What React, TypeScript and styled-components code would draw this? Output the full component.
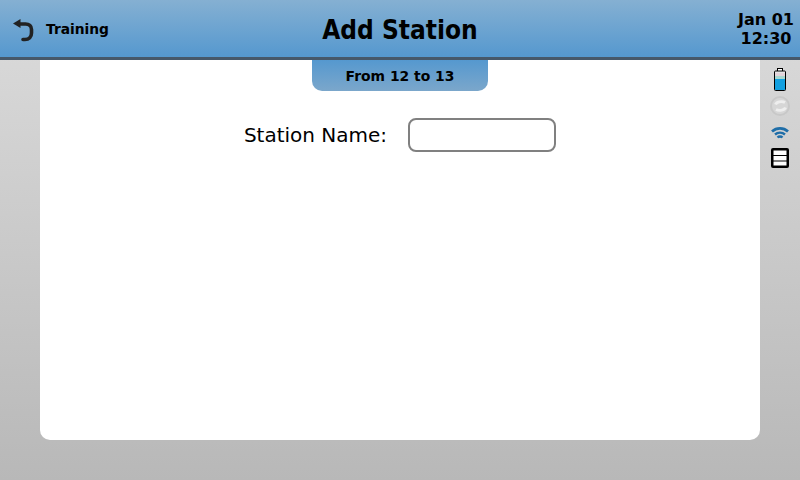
import styled, { createGlobalStyle } from 'styled-components'

const GlobalStyle = createGlobalStyle`
  html, body {
    margin: 0;
    padding: 0;
    overflow: hidden;
  }
  * {
    box-sizing: border-box;
  }
`

const Screen = styled.div`
  width: 800px;
  height: 480px;
  display: flex;
  flex-direction: column;
  background: linear-gradient(to bottom, #dcdcdc, #b8b8b8);
  font-family: 'DejaVu Sans', sans-serif;
  color: #000;
`

const Header = styled.header`
  height: 60px;
  flex: none;
  display: grid;
  grid-template-columns: 1fr auto 1fr;
  align-items: center;
  background: linear-gradient(to bottom, #85b0d2, #5598cf);
  border-bottom: 3px solid #46586a;
`

const BackArea = styled.div`
  display: flex;
  align-items: center;
  gap: 12px;
  padding-left: 12px;
`

const BackIconSlot = styled.div`
  display: flex;
  margin-top: 3px;
`

const BackLabel = styled.span`
  font-size: 13.8px;
  font-weight: bold;
`

const Title = styled.h1`
  margin: 2px 0 0;
  font-family: 'DejaVu Sans Condensed', 'DejaVu Sans', sans-serif;
  font-size: 26px;
  font-weight: bold;
`

const Clock = styled.div`
  justify-self: end;
  width: 56px;
  margin-right: 6px;
  margin-top: 1px;
  text-align: center;
  white-space: nowrap;
  font-size: 16px;
  font-weight: bold;
  line-height: 19px;
`

const Body = styled.div`
  flex: 1;
  display: flex;
  padding-left: 40px;
  padding-bottom: 40px;
`

const Panel = styled.main`
  width: 720px;
  display: flex;
  flex-direction: column;
  align-items: center;
  background: #fff;
  border-radius: 0 0 10px 10px;
`

const SubTab = styled.div`
  width: 176px;
  height: 31px;
  flex: none;
  display: flex;
  align-items: center;
  justify-content: center;
  font-size: 13.9px;
  font-weight: bold;
  background: linear-gradient(to bottom, #5598cf, #7ba7cb);
  border-radius: 0 0 10px 10px;
`

const FormRow = styled.div`
  display: flex;
  align-items: center;
  gap: 21px;
  margin-top: 27px;
`

const FieldLabel = styled.label`
  font-size: 20px;
`

const TextInput = styled.input`
  width: 148px;
  height: 34px;
  padding: 0 8px;
  background: #fff;
  border: 2px solid #808080;
  border-radius: 8px;
  outline: none;
`

const StatusRail = styled.aside`
  width: 40px;
  display: flex;
  flex-direction: column;
  align-items: center;
  padding-top: 8px;
`

const SyncBadge = styled.div`
  width: 20px;
  height: 20px;
  margin-top: 5px;
  margin-bottom: 11px;
  border-radius: 50%;
  background: #d6d6d6;
  border: 2px solid #c8c8c8;
  display: flex;
  align-items: center;
  justify-content: center;
`

const StorageSlot = styled.div`
  margin-top: 9px;
  display: flex;
`

function BackIcon() {
  return (
    <svg width="22" height="25" viewBox="0 0 22 25" fill="none">
      <path d="M7 6h6.500c3.500 0 6 2 6 5.500v3.500c0 4-2.500 6.500-6.500 6.500h-2" stroke="#222" strokeWidth="3.600" strokeLinecap="round" />
      <path d="M1 5.500l7.500-4.500v9z" fill="#222" />
    </svg>
  )
}

function BatteryIcon() {
  return (
    <svg width="14" height="23" viewBox="0 0 14 23">
      <rect x="4.500" y="0.500" width="5" height="3" fill="#fff" stroke="#000" />
      <rect x="1.500" y="3" width="11" height="19.500" rx="1" fill="#e6e6e6" stroke="#000" />
      <rect x="2" y="5" width="10" height="3" fill="#e3d4da" />
      <rect x="2" y="8" width="10" height="3" fill="#a8d8d0" />
      <rect x="2" y="11" width="10" height="11" fill="#12a0e0" />
    </svg>
  )
}

function SyncIcon() {
  return (
    <svg width="13" height="14" viewBox="0 0 13 14" fill="none">
      <path d="M1.500 5.500c.8-2.500 6-4 9.500-2M11.500 8.500c-.8 2.500-6 4-9.500 2" stroke="#eeeeee" strokeWidth="2.800" />
    </svg>
  )
}

function WifiIcon() {
  return (
    <svg width="18" height="12" viewBox="0 0 18 12" fill="none">
      <path d="M1 4.500a12 12 0 0 1 16 0" stroke="#1f6ea8" strokeWidth="2.800" />
      <path d="M4 7.500a7.500 7.500 0 0 1 10 0" stroke="#1f6ea8" strokeWidth="2.400" />
      <path d="M6.500 10.500a3.500 3.500 0 0 1 5 0" stroke="#1f6ea8" strokeWidth="2.400" />
    </svg>
  )
}

function StorageIcon() {
  return (
    <svg width="18" height="20" viewBox="0 0 18 20">
      <rect x="0" y="0" width="18" height="20" rx="2" fill="#000" />
      <rect x="2.500" y="2.500" width="13" height="4.500" fill="#fff" />
      <rect x="2.500" y="8" width="13" height="4.500" fill="#fff" />
      <rect x="2.500" y="13.500" width="13" height="4" fill="#fff" />
    </svg>
  )
}

export default function App() {
  return (
    <>
      <GlobalStyle />
      <Screen>
        <Header>
          <BackArea>
            <BackIconSlot>
              <BackIcon />
            </BackIconSlot>
            <BackLabel>Training</BackLabel>
          </BackArea>
          <Title>Add Station</Title>
          <Clock>
            Jan 01
            <br />
            12:30
          </Clock>
        </Header>
        <Body>
          <Panel>
            <SubTab>From 12 to 13</SubTab>
            <FormRow>
              <FieldLabel>Station Name:</FieldLabel>
              <TextInput type="text" />
            </FormRow>
          </Panel>
          <StatusRail>
            <BatteryIcon />
            <SyncBadge>
              <SyncIcon />
            </SyncBadge>
            <WifiIcon />
            <StorageSlot>
              <StorageIcon />
            </StorageSlot>
          </StatusRail>
        </Body>
      </Screen>
    </>
  )
}
